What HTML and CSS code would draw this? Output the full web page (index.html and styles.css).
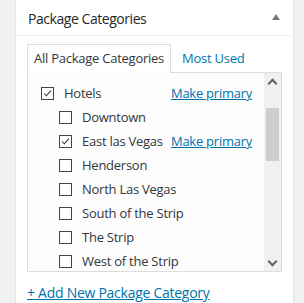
FILE: index.html
```html
<!DOCTYPE html>
<html lang="en">
<head>
    <meta charset="UTF-8">
    <meta name="viewport" content="width=device-width, initial-scale=1.0">
    <title>Package Categories</title>
    <link rel="stylesheet" href="styles.css">
</head>
<body>
    <div class="postbox">
        <div class="postbox-header">
            <h2>Package Categories</h2>
            <span class="toggle-arrow"></span>
        </div>

        <div class="inside">
            <ul class="tabs">
                <li class="tab active">All Package Categories</li>
                <li class="tab"><a href="#">Most Used</a></li>
            </ul>

            <div class="tab-panel">
                <ul class="checklist">
                    <li class="cat">
                        <label><span class="box checked"><svg viewBox="0 0 13 13"><polyline points="2.5,6.5 5.2,9.2 10.5,3.2"/></svg></span>Hotels</label>
                        <a class="make-primary" href="#">Make primary</a>
                    </li>
                    <li class="cat child">
                        <label><span class="box"></span>Downtown</label>
                    </li>
                    <li class="cat child">
                        <label><span class="box checked"><svg viewBox="0 0 13 13"><polyline points="2.5,6.5 5.2,9.2 10.5,3.2"/></svg></span>East las Vegas</label>
                        <a class="make-primary" href="#">Make primary</a>
                    </li>
                    <li class="cat child">
                        <label><span class="box"></span>Henderson</label>
                    </li>
                    <li class="cat child">
                        <label><span class="box"></span>North Las Vegas</label>
                    </li>
                    <li class="cat child">
                        <label><span class="box"></span>South of the Strip</label>
                    </li>
                    <li class="cat child">
                        <label><span class="box"></span>The Strip</label>
                    </li>
                    <li class="cat child">
                        <label><span class="box"></span>West of the Strip</label>
                    </li>
                </ul>
                <div class="scrollbar">
                    <span class="arrow up"></span>
                    <div class="track"><div class="thumb"></div></div>
                    <span class="arrow down"></span>
                </div>
            </div>

            <a class="add-new" href="#">+ Add New Package Category</a>
        </div>
    </div>
</body>
</html>
```

FILE: styles.css
```css
body {
    margin: 0;
    padding: 0 10px 0 15px;
    background-color: #f1f1f1;
    font-family: "Open Sans", sans-serif;
    font-size: 13px;
    letter-spacing: -0.25px;
    color: #32373c;
}
a {
    color: #0073aa;
}
.postbox {
    background: white;
    border-left: 1px solid #e5e5e5;
    border-right: 1px solid #e5e5e5;
    height: 303px;
}
.postbox-header {
    display: flex;
    align-items: center;
    justify-content: space-between;
    height: 36px;
    padding: 1px 12px 0 12px;
    box-sizing: border-box;
    border-bottom: 1px solid #eee;
}
.postbox-header h2 {
    margin: 0;
    font-size: 14px;
    font-weight: normal;
    letter-spacing: -0.45px;
    color: #23282d;
}
.toggle-arrow {
    width: 0;
    height: 0;
    border-left: 4px solid transparent;
    border-right: 4px solid transparent;
    border-bottom: 6px solid #72777c;
    margin-right: 1px;
    margin-top: -2px;
}
.inside {
    padding: 8px 11px 0 11px;
}
.tabs {
    display: flex;
    list-style: none;
    margin: 0;
    padding: 0;
    position: relative;
    z-index: 1;
}
.tab {
    height: 28px;
    line-height: 27px;
    padding: 0 6px;
    box-sizing: border-box;
    border: 1px solid transparent;
    border-bottom: none;
}
.tab.active {
    border-color: #ddd;
    background: #fff;
    height: 29px;
    margin-bottom: -1px;
}
.tab a {
    text-decoration: none;
    padding-left: 4px;
}
.tab-panel {
    display: flex;
    height: 200px;
    border: 1px solid #ddd;
    box-sizing: border-box;
    background: #fdfdfd;
    overflow: hidden;
}
.checklist {
    flex: 1;
    list-style: none;
    margin: 0;
    padding: 8px 12px 0 13px;
}
.cat {
    display: flex;
    align-items: center;
    justify-content: space-between;
    height: 24px;
}
.cat.child {
    padding-left: 18px;
}
.cat label {
    display: flex;
    align-items: center;
    white-space: nowrap;
}
.box {
    width: 13px;
    height: 13px;
    border: 1px solid #444;
    box-sizing: border-box;
    background: #fff;
    margin-right: 10px;
    display: flex;
}
.box svg {
    width: 11px;
    height: 11px;
    fill: none;
    stroke: #333;
    stroke-width: 1.2;
}
.make-primary {
    white-space: nowrap;
}
.scrollbar {
    width: 17px;
    display: flex;
    flex-direction: column;
    background: #f0f0f0;
}
.arrow {
    height: 17px;
    display: flex;
    align-items: center;
    justify-content: center;
}
.arrow::before {
    content: "";
    width: 5px;
    height: 5px;
    border-top: 2px solid #606060;
    border-left: 2px solid #606060;
}
.arrow.up::before {
    transform: rotate(45deg);
    margin-top: 3px;
}
.arrow.down::before {
    transform: rotate(-135deg);
    margin-top: -3px;
}
.track {
    flex: 1;
    padding: 18px 2px 0 2px;
}
.thumb {
    height: 53px;
    background: #cdcdcd;
}
.add-new {
    display: inline-block;
    margin-top: 11px;
    font-size: 14px;
    letter-spacing: -0.27px;
}
```
